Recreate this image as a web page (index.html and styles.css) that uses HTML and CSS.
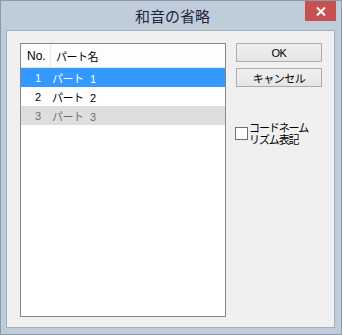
FILE: index.html
```html
<!DOCTYPE html>
<html lang="ja">
<head>
<meta charset="utf-8">
<title>和音の省略</title>
<link rel="stylesheet" href="styles.css">
</head>
<body>
<div class="window">
  <div class="titlebar">
    <span class="title">和音の省略</span>
    <div class="close">
      <svg width="10" height="9" viewBox="0 0 10 9"><path d="M1 0.5 L9 8.5 M9 0.5 L1 8.5" stroke="#fff" stroke-width="2" fill="none"/></svg>
    </div>
  </div>
  <div class="client">
    <div class="list">
      <div class="row head">
        <div class="c-no">No.</div>
        <div class="c-name">パート名</div>
      </div>
      <div class="row selected">
        <div class="c-no">1</div>
        <div class="c-name">パート 1</div>
      </div>
      <div class="row">
        <div class="c-no">2</div>
        <div class="c-name">パート 2</div>
      </div>
      <div class="row disabled">
        <div class="c-no">3</div>
        <div class="c-name">パート 3</div>
      </div>
    </div>
    <div class="side">
      <button class="btn">OK</button>
      <button class="btn">キャンセル</button>
      <label class="check">
        <span class="box"></span>
        <span class="label">
          <span class="line">コードネーム</span>
          <span class="line">リズム表記</span>
        </span>
      </label>
    </div>
  </div>
</div>
</body>
</html>
```
FILE: styles.css
```css
html, body {
  margin: 0;
  padding: 0;
}
body {
  font-family: "Liberation Sans", "Noto Sans CJK JP", sans-serif;
  font-size: 11px;
  color: #000;
}
.window {
  box-sizing: border-box;
  width: 342px;
  height: 335px;
  background: #bfcddb;
  border: 1px solid #8e9aa8;
  padding: 0 6px 6px 5px;
  display: flex;
  flex-direction: column;
}
.titlebar {
  position: relative;
  height: 29px;
  display: flex;
  align-items: center;
  justify-content: center;
}
.title {
  font-family: "Noto Sans CJK JP", sans-serif;
  font-size: 15px;
  color: #1f2440;
  margin-top: -1px;
  margin-left: 4px;
}
.close {
  position: absolute;
  right: -1px;
  top: 0;
  width: 31px;
  height: 20px;
  background: #c75050;
  display: flex;
  align-items: center;
  justify-content: center;
}
.client {
  flex: 1;
  border: 1px solid #a3afbc;
  background: #f0f0f0;
  display: flex;
  align-items: flex-start;
  padding: 12px 0 0 13px;
}
.list {
  box-sizing: border-box;
  width: 206px;
  height: 274px;
  border: 1px solid #828790;
  background: #fff;
}
.row {
  display: flex;
  height: 19px;
  align-items: center;
  font-family: "Liberation Sans", "Noto Sans CJK JP", sans-serif;
  font-size: 11px;
}
.row .c-name {
  letter-spacing: -0.5px;
  word-spacing: 4px;
}
.c-no {
  box-sizing: border-box;
  width: 30px;
  padding-left: 14px;
}
.c-name {
  padding-left: 1px;
}
.row.head {
  height: 24px;
  box-sizing: border-box;
  background: #fdfdfd;
  border-bottom: 1px solid #e5e5e5;
}
.row.head .c-no {
  padding-left: 6px;
  height: 100%;
  display: flex;
  align-items: center;
  border-right: 1px solid #e3ebf5;
  font-size: 12px;
}
.row.head .c-name {
  padding-left: 5px;
}
.row.selected {
  background: #3399ff;
  color: #fff;
}
.row.disabled {
  background: #dedede;
  color: #6d6d6d;
}
.side {
  display: flex;
  flex-direction: column;
  margin-left: 10px;
  width: 86px;
}
.btn {
  box-sizing: border-box;
  width: 86px;
  height: 19px;
  margin: 0 0 6px 0;
  padding: 0;
  border: 1px solid #acacac;
  background: linear-gradient(#f0f0f0, #e5e5e5);
  font-family: "Liberation Sans", "Noto Sans CJK JP", sans-serif;
  font-size: 11px;
  color: #000;
  letter-spacing: -0.5px;
}
.check {
  display: flex;
  align-items: center;
  margin-top: 28px;
  margin-left: -1px;
}
.box {
  box-sizing: border-box;
  width: 13px;
  height: 13px;
  border: 1px solid #707070;
  background: #fff;
  flex: none;
  margin-top: 1px;
}
.label {
  display: flex;
  flex-direction: column;
  font-family: "Noto Sans CJK JP", sans-serif;
  font-size: 11px;
  letter-spacing: -1.1px;
  margin-left: 1px;
}
.line {
  display: block;
  height: 12px;
  line-height: 12px;
}
```
